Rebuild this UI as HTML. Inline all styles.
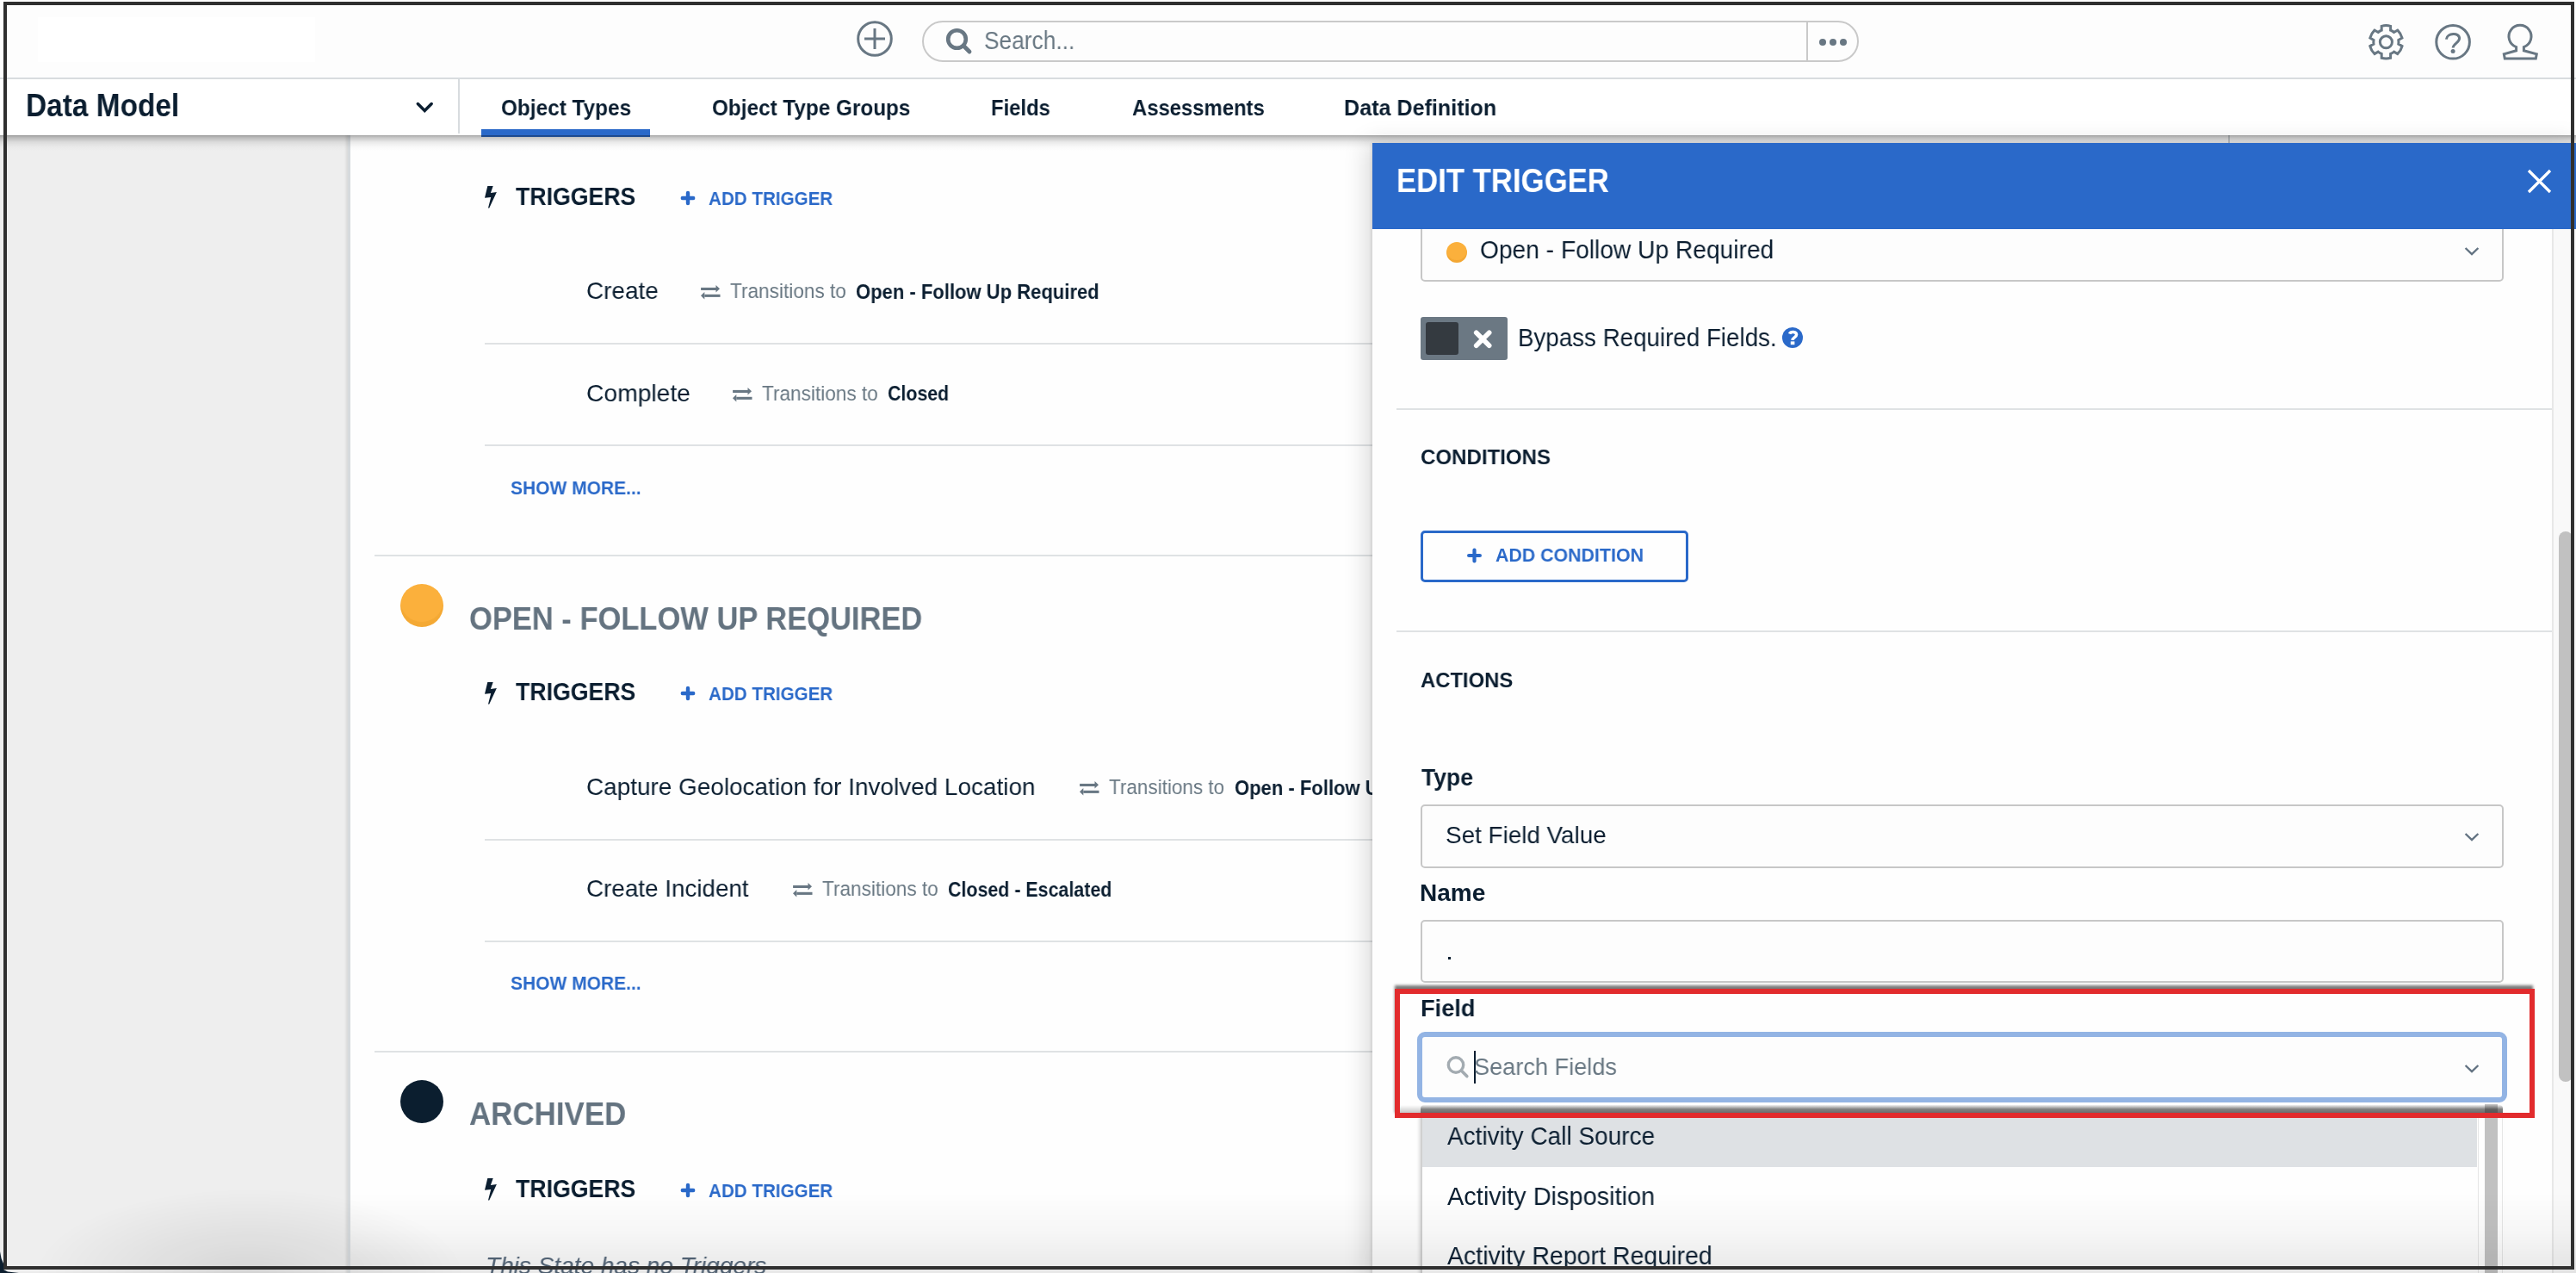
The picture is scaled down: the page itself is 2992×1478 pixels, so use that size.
<!DOCTYPE html>
<html><head><meta charset="utf-8">
<style>
html,body{margin:0;padding:0;width:2992px;height:1478px;overflow:hidden;background:#fefefe;font-family:"Liberation Sans",sans-serif;}
.a{position:absolute;display:block;}
.t{position:absolute;white-space:nowrap;line-height:1;transform-origin:0 0;will-change:transform;}
#hdr{position:absolute;left:0;top:0;width:2992px;height:90px;background:#fdfdfd;border-bottom:2px solid #d8dcdf;}
#nav{position:absolute;left:0;top:92px;width:2992px;height:65px;background:#ffffff;z-index:2;}
#navsh{position:absolute;left:0;top:157px;width:2992px;height:18px;background:linear-gradient(rgba(0,0,0,.34),rgba(0,0,0,.22) 15%,rgba(0,0,0,.08) 45%,rgba(0,0,0,.02) 75%,rgba(0,0,0,0));z-index:2;}
#leftp{position:absolute;left:0;top:157px;width:404px;height:1321px;background:#eeeeee;box-shadow:inset -3px 0 3px -1px rgba(0,0,0,.09);}
#leftb{position:absolute;left:404px;top:157px;width:3px;height:1321px;background:#d6dadd;}
.sep{position:absolute;height:2px;background:#dfe2e4;}
#panel{position:absolute;left:1594px;top:166px;width:1400px;height:1320px;background:#fefefe;box-shadow:-1px 0 4px rgba(0,0,0,.12),-6px 0 26px rgba(0,0,0,.15);z-index:3;overflow:hidden;}
#phead{position:absolute;left:0;top:0;width:1400px;height:100px;background:#2a69c9;z-index:5;}
.inp{position:absolute;border:2px solid #c7c7c7;border-radius:5px;background:#fdfdfd;box-sizing:border-box;}
.frame{position:absolute;background:#2f2f2f;z-index:50;}
</style></head><body>
<div id="hdr"></div>
<div class="a" style="left:44px;top:20px;width:322px;height:52px;background:#ffffff;"></div>
<!-- header icons -->
<svg class="a" style="left:990px;top:20px" width="52" height="52"><circle cx="26" cy="25" r="19.3" fill="none" stroke="#687783" stroke-width="3"/><path d="M26 13V37M14 25H38" stroke="#687783" stroke-width="3"/></svg>
<div class="a" style="left:1071px;top:24px;width:1088px;height:48px;box-sizing:border-box;border:2px solid #c9c9c9;border-radius:24px;background:#fdfdfd;"></div>
<div class="a" style="left:2098px;top:25px;width:2px;height:46px;background:#c9c9c9;"></div>
<svg class="a" style="left:1090px;top:25px" width="45" height="45"><circle cx="21.5" cy="20.5" r="10.3" fill="none" stroke="#687783" stroke-width="4.6"/><path d="M29 28L36 35" stroke="#687783" stroke-width="4.8" stroke-linecap="round"/></svg>
<svg class="a" style="left:2105px;top:37px" width="48" height="24"><circle cx="12" cy="12" r="4" fill="#687783"/><circle cx="24" cy="12" r="4" fill="#687783"/><circle cx="36" cy="12" r="4" fill="#687783"/></svg>
<svg class="a" style="left:2746px;top:24px" width="52" height="52"><g transform="translate(25.4,24.8)" fill="none" stroke="#687783" stroke-width="3"><path d="M-5.20 -13.64L-5.20 -18.48A19.2 19.2 0 0 1 5.20 -18.48L5.20 -13.64A14.6 14.6 0 0 1 9.21 -11.32L13.41 -13.74A19.2 19.2 0 0 1 18.61 -4.74L14.41 -2.32A14.6 14.6 0 0 1 14.41 2.32L18.61 4.74A19.2 19.2 0 0 1 13.41 13.74L9.21 11.32A14.6 14.6 0 0 1 5.20 13.64L5.20 18.48A19.2 19.2 0 0 1 -5.20 18.48L-5.20 13.64A14.6 14.6 0 0 1 -9.21 11.32L-13.41 13.74A19.2 19.2 0 0 1 -18.61 4.74L-14.41 2.32A14.6 14.6 0 0 1 -14.41 -2.32L-18.61 -4.74A19.2 19.2 0 0 1 -13.41 -13.74L-9.21 -11.32A14.6 14.6 0 0 1 -5.20 -13.64Z"/><circle cx="0" cy="0" r="7.05"/></g></svg>
<svg class="a" style="left:2823px;top:23px" width="52" height="52"><circle cx="26.1" cy="25.8" r="19.3" fill="none" stroke="#687783" stroke-width="3"/><path d="M18.4 22.6C19.2 15.2 33.6 14.3 33.6 21.6C33.6 26.6 26.2 27.6 26.2 32.6" fill="none" stroke="#687783" stroke-width="3"/><circle cx="26.1" cy="36.4" r="2.5" fill="#687783"/></svg>
<svg class="a" style="left:2900px;top:23px" width="56" height="52"><path d="M22.6 31.6A13 13 0 1 1 31.4 31.6L31.4 35.8L46.3 39.8L45.3 45.1L9.3 45.1L8.3 39.8L22.6 35.8Z" fill="none" stroke="#687783" stroke-width="3" stroke-linejoin="miter"/></svg>

<div id="nav">
  <div class="a" style="left:532px;top:0;width:2px;height:63px;background:#d8dcdf;"></div>
  <svg class="a" style="left:478px;top:22px" width="30" height="22"><path d="M7.3 6.5L15.25 14.5L23.2 6.5" fill="none" stroke="#0b1e30" stroke-width="3.5" stroke-linecap="round"/></svg>
  <div class="a" style="left:559px;top:58px;width:196px;height:9px;background:#2a69c9;"></div>
</div>

<div id="navsh"></div>
<div id="leftp"></div><div id="leftb"></div>
<div class="a" style="left:2588px;top:157px;width:2px;height:20px;background:#cfd3d6;"></div>

<!-- main separators -->
<div class="sep" style="left:563px;top:398px;width:1100px;"></div>
<div class="sep" style="left:563px;top:516px;width:1100px;"></div>
<div class="sep" style="left:435px;top:644px;width:1200px;"></div>
<div class="sep" style="left:563px;top:974px;width:1100px;"></div>
<div class="sep" style="left:563px;top:1092px;width:1100px;"></div>
<div class="sep" style="left:435px;top:1220px;width:1200px;"></div>
<!-- state dots -->
<div class="a" style="left:465px;top:678px;width:50px;height:50px;border-radius:50%;background:#fbb03c;box-shadow:inset 0 -6px 0 rgba(200,120,0,.12);"></div>
<div class="a" style="left:465px;top:1254px;width:50px;height:50px;border-radius:50%;background:#0b1e2f;"></div>
<!-- bottom fade -->
<div class="a" style="left:407px;top:1385px;width:2600px;height:93px;background:linear-gradient(rgba(0,0,0,0),rgba(0,0,0,.03) 50%,rgba(0,0,0,.085));z-index:4;"></div>
<div class="a" style="left:40px;top:1380px;width:500px;height:200px;background:radial-gradient(closest-side,rgba(0,0,0,.10),rgba(0,0,0,.04) 60%,rgba(0,0,0,0));z-index:4;"></div>
<div class="a" style="left:0;top:1450px;width:30px;height:28px;background:#0c1e2e;clip-path:polygon(0 3px,1.5px 11px,4px 17px,4px 24px,9px 26.5px,22px 28px,0 28px);z-index:40;"></div>

<svg class="a" style="left:560px;top:213.1px" width="20" height="30"><polygon points="6.3,3.0 12.7,3.0 9.9,11.0 16.9,9.9 8.3,28.5 7.0,28.5 10.2,15.9 3.0,16.7" fill="#0b1e30"/></svg>
<svg class="a" style="left:788.5px;top:219.5px" width="20" height="20"><path d="M10 3.9V16.1M3.8 10H16.2" stroke="#2a69c9" stroke-width="4.4" stroke-linecap="round"/></svg>
<svg class="a" style="left:560px;top:788.5px" width="20" height="30"><polygon points="6.3,3.0 12.7,3.0 9.9,11.0 16.9,9.9 8.3,28.5 7.0,28.5 10.2,15.9 3.0,16.7" fill="#0b1e30"/></svg>
<svg class="a" style="left:788.5px;top:794.9px" width="20" height="20"><path d="M10 3.9V16.1M3.8 10H16.2" stroke="#2a69c9" stroke-width="4.4" stroke-linecap="round"/></svg>
<svg class="a" style="left:560px;top:1365.1px" width="20" height="30"><polygon points="6.3,3.0 12.7,3.0 9.9,11.0 16.9,9.9 8.3,28.5 7.0,28.5 10.2,15.9 3.0,16.7" fill="#0b1e30"/></svg>
<svg class="a" style="left:788.5px;top:1371.5px" width="20" height="20"><path d="M10 3.9V16.1M3.8 10H16.2" stroke="#2a69c9" stroke-width="4.4" stroke-linecap="round"/></svg>
<svg class="a" style="left:812.8px;top:330.1px" width="25" height="19"><g fill="#687783"><rect x="1.1" y="3.9" width="18" height="3.1"/><polygon points="18.5,1 23,5.2 18.5,9.5"/><rect x="5.3" y="11.8" width="18.2" height="3.1"/><polygon points="5.3,8.9 1,13.3 5.3,17.6"/></g></svg>
<svg class="a" style="left:850.1px;top:448.6px" width="25" height="19"><g fill="#687783"><rect x="1.1" y="3.9" width="18" height="3.1"/><polygon points="18.5,1 23,5.2 18.5,9.5"/><rect x="5.3" y="11.8" width="18.2" height="3.1"/><polygon points="5.3,8.9 1,13.3 5.3,17.6"/></g></svg>
<svg class="a" style="left:1252.5px;top:906.1px" width="25" height="19"><g fill="#687783"><rect x="1.1" y="3.9" width="18" height="3.1"/><polygon points="18.5,1 23,5.2 18.5,9.5"/><rect x="5.3" y="11.8" width="18.2" height="3.1"/><polygon points="5.3,8.9 1,13.3 5.3,17.6"/></g></svg>
<svg class="a" style="left:919.8px;top:1024.1px" width="25" height="19"><g fill="#687783"><rect x="1.1" y="3.9" width="18" height="3.1"/><polygon points="18.5,1 23,5.2 18.5,9.5"/><rect x="5.3" y="11.8" width="18.2" height="3.1"/><polygon points="5.3,8.9 1,13.3 5.3,17.6"/></g></svg>
<div style="position:absolute;left:0;top:0;width:1594px;height:1478px;overflow:hidden;z-index:2;">
<div class="t" style="left:599.0px;top:213.9px;font-size:29.0px;color:#0b1e30;font-weight:bold;transform:scaleX(0.9200);">TRIGGERS</div>
<div class="t" style="left:822.7px;top:219.9px;font-size:22.0px;color:#2a69c9;font-weight:bold;transform:scaleX(0.9368);">ADD TRIGGER</div>
<div class="t" style="left:681.0px;top:323.2px;font-size:28.5px;color:#0b1e30;transform:scaleX(0.9788);">Create</div>
<div class="t" style="left:848.0px;top:326.1px;font-size:24.5px;color:#697883;transform:scaleX(0.9223);">Transitions to</div>
<div class="t" style="left:993.8px;top:326.8px;font-size:24.0px;color:#0b1e30;font-weight:bold;transform:scaleX(0.9177);">Open - Follow Up Required</div>
<div class="t" style="left:680.9px;top:441.7px;font-size:28.5px;color:#0b1e30;transform:scaleX(0.9917);">Complete</div>
<div class="t" style="left:885.4px;top:444.7px;font-size:24.5px;color:#697883;transform:scaleX(0.9216);">Transitions to</div>
<div class="t" style="left:1031.1px;top:445.1px;font-size:24.0px;color:#0b1e30;font-weight:bold;transform:scaleX(0.8896);">Closed</div>
<div class="t" style="left:592.7px;top:555.6px;font-size:22.5px;color:#2a69c9;font-weight:bold;transform:scaleX(0.9329);">SHOW MORE...</div>
<div class="t" style="left:545.4px;top:700.5px;font-size:36.5px;color:#647380;font-weight:bold;transform:scaleX(0.9450);">OPEN - FOLLOW UP REQUIRED</div>
<div class="t" style="left:599.0px;top:789.4px;font-size:29.0px;color:#0b1e30;font-weight:bold;transform:scaleX(0.9200);">TRIGGERS</div>
<div class="t" style="left:822.7px;top:795.3px;font-size:22.0px;color:#2a69c9;font-weight:bold;transform:scaleX(0.9368);">ADD TRIGGER</div>
<div class="t" style="left:681.0px;top:899.1px;font-size:28.5px;color:#0b1e30;transform:scaleX(0.9796);">Capture Geolocation for Involved Location</div>
<div class="t" style="left:1288.0px;top:902.2px;font-size:24.5px;color:#697883;transform:scaleX(0.9175);">Transitions to</div>
<div class="t" style="left:1433.5px;top:902.6px;font-size:24.0px;color:#0b1e30;font-weight:bold;transform:scaleX(0.9177);">Open - Follow Up Required</div>
<div class="t" style="left:680.6px;top:1017.2px;font-size:28.5px;color:#0b1e30;transform:scaleX(0.9757);">Create Incident</div>
<div class="t" style="left:955.4px;top:1020.2px;font-size:24.5px;color:#697883;transform:scaleX(0.9216);">Transitions to</div>
<div class="t" style="left:1100.9px;top:1020.6px;font-size:24.0px;color:#0b1e30;font-weight:bold;transform:scaleX(0.8919);">Closed - Escalated</div>
<div class="t" style="left:592.6px;top:1131.2px;font-size:22.5px;color:#2a69c9;font-weight:bold;transform:scaleX(0.9329);">SHOW MORE...</div>
<div class="t" style="left:544.5px;top:1275.6px;font-size:36.5px;color:#647380;font-weight:bold;transform:scaleX(0.9561);">ARCHIVED</div>
<div class="t" style="left:599.0px;top:1365.9px;font-size:29.0px;color:#0b1e30;font-weight:bold;transform:scaleX(0.9200);">TRIGGERS</div>
<div class="t" style="left:822.7px;top:1371.9px;font-size:22.0px;color:#2a69c9;font-weight:bold;transform:scaleX(0.9368);">ADD TRIGGER</div>
<div class="t" style="left:564.0px;top:1454.8px;font-size:28.5px;color:#55677a;font-style:italic;transform:scaleX(0.9825);">This State has no Triggers</div>
</div>

<div id="panel">
  <div id="phead"></div>
  <svg class="a" style="left:1338px;top:27px;z-index:6" width="34" height="34"><path d="M5 5L30 30M30 5L5 30" stroke="#fff" stroke-width="3.3"/></svg>
  <!-- status select -->
  <div class="inp" style="left:56px;top:60px;width:1258px;height:101px;"></div>
  <div class="a" style="left:86px;top:115px;width:24px;height:24px;border-radius:50%;background:#fbb03c;box-shadow:inset 0 -3px 0 rgba(200,120,0,.15);"></div>
  <svg class="a" style="left:1266px;top:117px" width="22" height="16"><path d="M3.6 5L11 12.1L18.4 5" fill="none" stroke="#637382" stroke-width="2.4"/></svg>
  <!-- toggle -->
  <div class="a" style="left:56px;top:202px;width:101px;height:50px;border-radius:3px;background:#6b7883;"></div>
  <div class="a" style="left:62px;top:208px;width:38px;height:38px;border-radius:3px;background:#343a40;"></div>
  <svg class="a" style="left:114px;top:214px" width="28" height="28"><path d="M6.7 6.25L21.7 21.25M21.7 6.25L6.7 21.25" stroke="#fff" stroke-width="5.6" stroke-linecap="round"/></svg>
  <svg class="a" style="left:475.5px;top:214px" width="25" height="25"><circle cx="12" cy="12" r="12" fill="#2a69c9"/><path d="M8.6 7.6C9.8 4.6 16.6 4.4 16.6 8.6C16.6 11.6 12.1 11.6 12.1 14.9" fill="none" stroke="#fff" stroke-width="3.5"/><rect x="9.8" y="16.4" width="4.6" height="3.8" fill="#fff"/></svg>
  <div class="sep" style="left:28px;top:308px;width:1342px;"></div>
  <!-- add condition btn -->
  <div class="a" style="left:56px;top:450px;width:311px;height:60px;box-sizing:border-box;border:3px solid #2a69c9;border-radius:5px;"></div>
  <svg class="a" style="left:108px;top:468px" width="22" height="22"><path d="M10.5 4.6V17.4M4.1 11H16.9" stroke="#2a69c9" stroke-width="4.2" stroke-linecap="round"/></svg>
  <div class="sep" style="left:28px;top:566px;width:1342px;"></div>
  <!-- type select -->
  <div class="inp" style="left:56px;top:768px;width:1258px;height:74px;"></div>
  <svg class="a" style="left:1266px;top:797px" width="22" height="16"><path d="M3.6 5L11 12.1L18.4 5" fill="none" stroke="#637382" stroke-width="2.4"/></svg>
  <!-- name input -->
  <div class="inp" style="left:56px;top:902px;width:1258px;height:73px;"></div>
  <div class="a" style="left:88px;top:945px;width:3px;height:3px;background:#0b1e30;"></div>
  <!-- red highlight box -->
  <div class="a" style="left:26px;top:982px;width:1324px;height:150px;box-sizing:border-box;border:6px solid #e22b2d;box-shadow:-1px -5px 3px -1px rgba(0,0,0,.52);z-index:10;"></div>
  <div class="a" style="left:32px;top:1117px;width:24px;height:9px;background:linear-gradient(rgba(0,0,0,0),rgba(0,0,0,.22));z-index:10;"></div>
  <div class="a" style="left:56px;top:1117px;width:1257px;height:9px;border-radius:4px 4px 0 0;background:linear-gradient(rgba(0,0,0,.05),rgba(0,0,0,.5) 55%,rgba(0,0,0,.55));z-index:10;"></div>
  <!-- search field (focused) -->
  <div class="a" style="left:52px;top:1032px;width:1266px;height:82px;box-sizing:border-box;border:6px solid #93b4e4;border-radius:9px;background:#fdfdfd;z-index:8;"></div>
  <svg class="a" style="left:84px;top:1058px;z-index:9" width="30" height="30"><circle cx="13" cy="12.5" r="8.7" fill="none" stroke="#a3abb1" stroke-width="3.4"/><path d="M19.6 19.2L25.8 25.6" stroke="#a3abb1" stroke-width="3.6" stroke-linecap="round"/></svg>
  <div class="a" style="left:118px;top:1054px;width:2px;height:38px;background:#0b1e30;z-index:9;"></div>
  <svg class="a" style="left:1266px;top:1066px;z-index:9" width="22" height="16"><path d="M3.6 5L11 12.1L18.4 5" fill="none" stroke="#637382" stroke-width="2.4"/></svg>
  <!-- dropdown list -->
  <div class="a" style="left:56px;top:1126px;width:1257px;height:240px;background:#fefefe;border-left:2px solid #d0d0d0;box-shadow:-2px 0 3px rgba(0,0,0,.12);z-index:7;">
    <div class="a" style="left:0;top:0;width:1225px;height:63px;background:#dee1e4;"></div>
    <div class="a" style="left:1226px;top:0;width:1px;height:240px;background:#e6e6e6;"></div>
    <div class="a" style="left:1234px;top:-10px;width:15px;height:260px;background:#c1c1c1;"></div>
    <div class="a" style="left:1254px;top:0;width:1px;height:240px;background:#e6e6e6;"></div>
  </div>
  <!-- panel scrollbar -->
  <div class="a" style="left:1370px;top:100px;width:2px;height:1220px;background:#e8e8e8;"></div>
  <div class="a" style="left:1372px;top:100px;width:28px;height:1220px;background:#f9f9f9;"></div>
  <div class="a" style="left:1378px;top:451px;width:16px;height:639px;background:#c1c1c1;border-radius:8px;"></div>
</div>

<div style="position:absolute;left:0;top:0;z-index:20;">
<div class="t" style="left:1143.1px;top:32.6px;font-size:29.0px;color:#697883;transform:scaleX(0.9071);">Search...</div>
<div class="t" style="left:29.6px;top:105.0px;font-size:36.5px;color:#0b1e30;font-weight:bold;transform:scaleX(0.9155);">Data Model</div>
<div class="t" style="left:581.5px;top:111.5px;font-size:26.5px;color:#0b1e30;font-weight:bold;transform:scaleX(0.9188);">Object Types</div>
<div class="t" style="left:827.1px;top:111.5px;font-size:26.5px;color:#0b1e30;font-weight:bold;transform:scaleX(0.9168);">Object Type Groups</div>
<div class="t" style="left:1151.2px;top:111.5px;font-size:26.5px;color:#0b1e30;font-weight:bold;transform:scaleX(0.8994);">Fields</div>
<div class="t" style="left:1314.6px;top:111.5px;font-size:26.5px;color:#0b1e30;font-weight:bold;transform:scaleX(0.8997);">Assessments</div>
<div class="t" style="left:1561.4px;top:111.5px;font-size:26.5px;color:#0b1e30;font-weight:bold;transform:scaleX(0.9479);">Data Definition</div>
<div class="t" style="left:1621.7px;top:191.4px;font-size:38.0px;color:#ffffff;font-weight:bold;transform:scaleX(0.9135);">EDIT TRIGGER</div>
<div class="t" style="left:1718.8px;top:275.4px;font-size:29.5px;color:#0b1e30;transform:scaleX(0.9547);">Open - Follow Up Required</div>
<div class="t" style="left:1762.6px;top:377.7px;font-size:29.0px;color:#0b1e30;transform:scaleX(0.9565);">Bypass Required Fields.</div>
<div class="t" style="left:1649.9px;top:519.4px;font-size:24.5px;color:#0b1e30;font-weight:bold;transform:scaleX(0.9816);">CONDITIONS</div>
<div class="t" style="left:1737.0px;top:634.8px;font-size:21.5px;color:#2a69c9;font-weight:bold;transform:scaleX(0.9929);">ADD CONDITION</div>
<div class="t" style="left:1649.6px;top:777.5px;font-size:24.5px;color:#0b1e30;font-weight:bold;transform:scaleX(0.9722);">ACTIONS</div>
<div class="t" style="left:1650.6px;top:889.2px;font-size:28.0px;color:#0b1e30;font-weight:bold;transform:scaleX(0.9476);">Type</div>
<div class="t" style="left:1679.4px;top:956.2px;font-size:28.0px;color:#0b1e30;transform:scaleX(0.9941);">Set Field Value</div>
<div class="t" style="left:1648.6px;top:1023.2px;font-size:28.0px;color:#0b1e30;font-weight:bold;">Name</div>
<div class="t" style="left:1649.6px;top:1156.7px;font-size:28.0px;color:#0b1e30;font-weight:bold;transform:scaleX(0.9705);">Field</div>
<div class="t" style="left:1712.4px;top:1223.8px;font-size:28.5px;color:#697883;transform:scaleX(0.9522);">Search Fields</div>
<div class="t" style="left:1680.9px;top:1304.5px;font-size:29.0px;color:#0b1e30;transform:scaleX(0.9651);">Activity Call Source</div>
<div class="t" style="left:1680.9px;top:1374.5px;font-size:29.0px;color:#0b1e30;transform:scaleX(0.9979);">Activity Disposition</div>
<div class="t" style="left:1680.9px;top:1444.3px;font-size:29.0px;color:#0b1e30;transform:scaleX(0.9842);">Activity Report Required</div>
</div>

<div class="frame" style="left:4px;top:2px;width:2986px;height:4px;"></div>
<div class="frame" style="left:4px;top:2px;width:4px;height:1472px;"></div>
<div class="frame" style="left:2986px;top:2px;width:4px;height:1472px;"></div>
<div class="frame" style="left:4px;top:1470px;width:2986px;height:4px;"></div>
</body></html>
